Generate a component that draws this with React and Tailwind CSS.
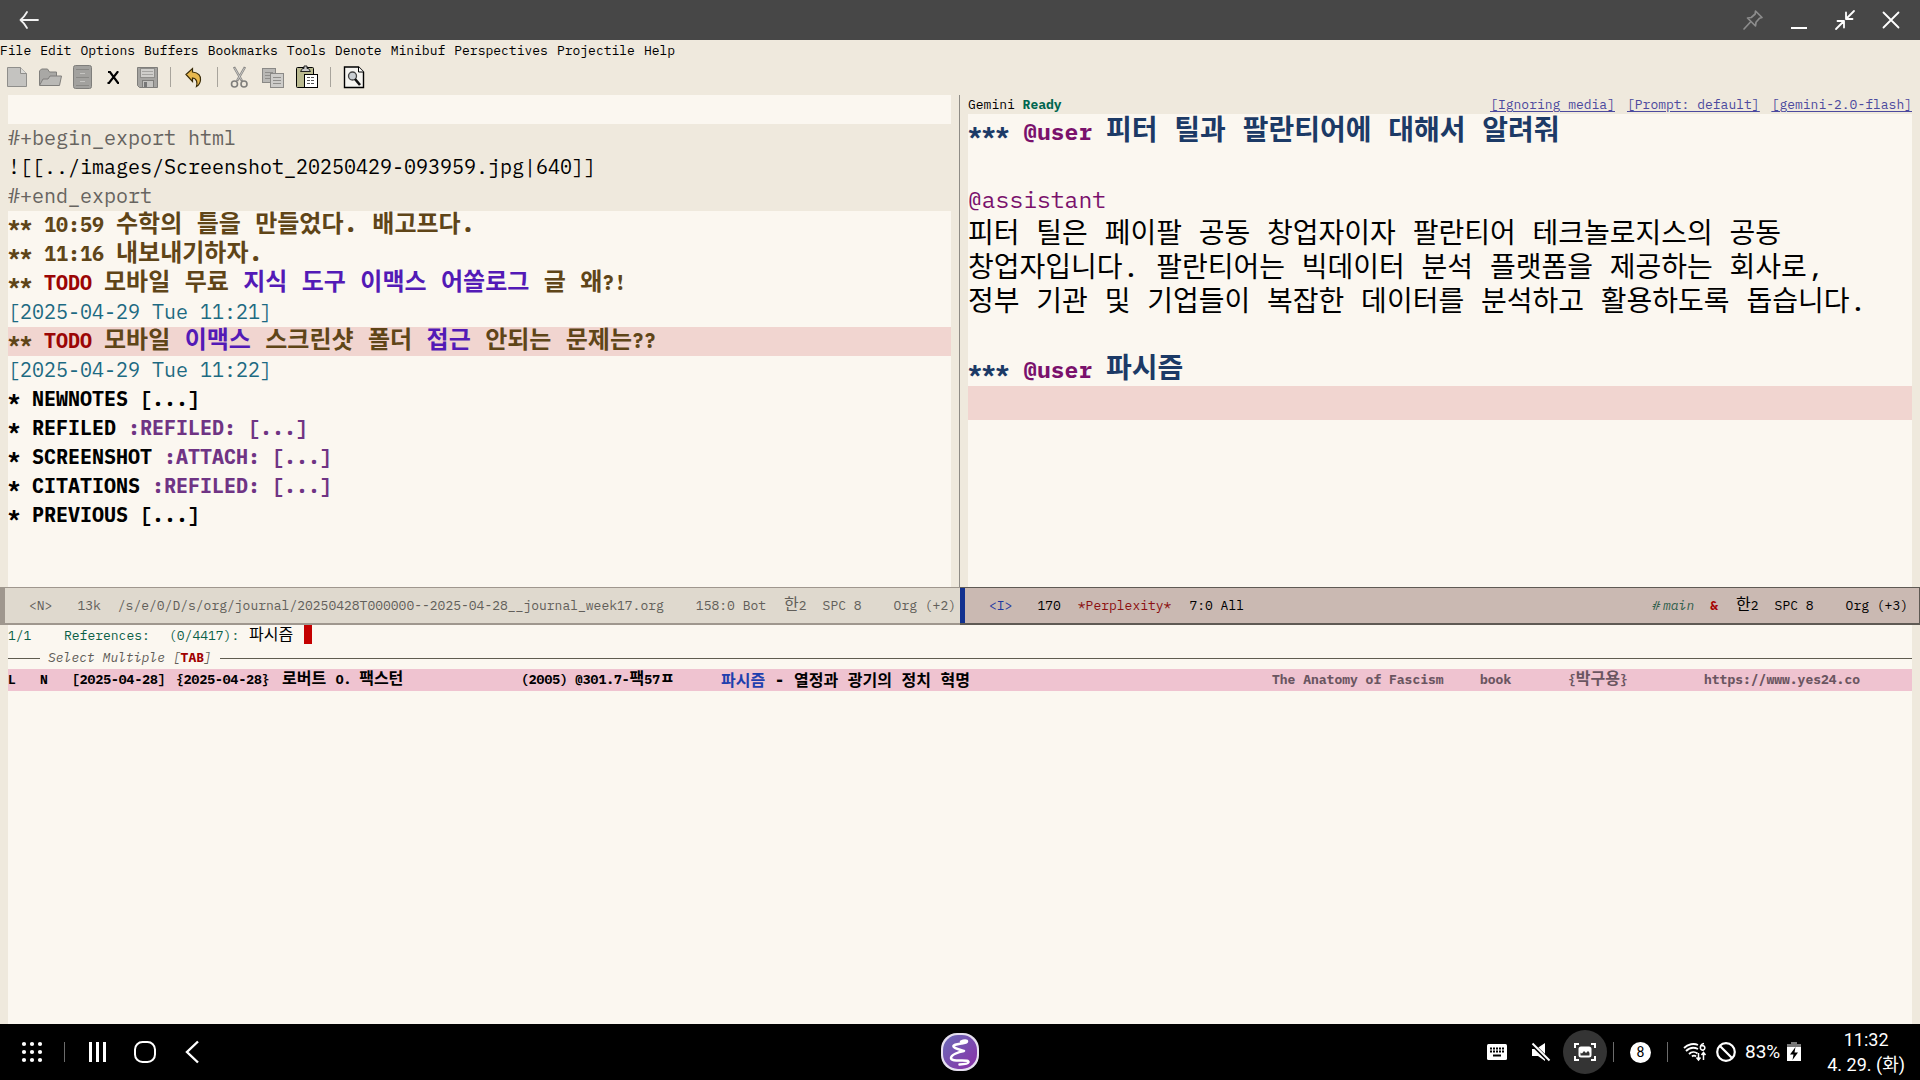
const MENUS = ["File", "Edit", "Options", "Buffers", "Bookmarks", "Tools", "Denote", "Minibuf", "Perspectives", "Projectile", "Help"];

const page = { fill: "#c4c3c0", stroke: "#8f8e8b" };

const Icon = {
  newFile: (
    <svg width="24" height="24" viewBox="0 0 24 24">
      <path d="M2.500 2.500h13l6 6v13h-19z" {...page} />
      <path d="M15.500 2.500v6h6" fill="#dddcd8" stroke="#8f8e8b" />
    </svg>
  ),
  open: (
    <svg width="24" height="24" viewBox="0 0 24 24">
      <path d="M1.500 20V6l2-2h6l2 3h7v4" fill="#a9a8a5" stroke="#807f7c" />
      <path d="M1.500 20.500L5 14h5l2-3h11.500l-2 9.500z" fill="#bab9b6" stroke="#807f7c" />
    </svg>
  ),
  drawer: (
    <svg width="24" height="24" viewBox="0 0 24 24">
      <rect x="2.500" y="0.500" width="18" height="23" rx="2" fill="#a2a19e" stroke="#7f7e7b" />
      <path d="M5 4.500h13M5 12.500h13M5 20.500h13" stroke="#8a8986" />
      <path d="M9 8.500h5M9 16.500h5" stroke="#c5c4c1" />
    </svg>
  ),
  close: (
    <svg width="22" height="24" viewBox="0 0 22 24">
      <path d="M4 7h2l8 11h1M14.500 7h-1L5 18H3.500" stroke="#000" strokeWidth="2.200" fill="none" />
    </svg>
  ),
  save: (
    <svg width="24" height="24" viewBox="0 0 24 24">
      <path d="M2.500 2.500h20v20h-18l-2-2z" fill="#a5a4a1" stroke="#7f7e7b" />
      <rect x="5.500" y="3.500" width="14" height="9" fill="#cfcecb" stroke="#8f8e8b" />
      <path d="M7 6.500h11M7 9.500h11" stroke="#a5a4a1" />
      <rect x="7.500" y="15.500" width="11" height="7" fill="#c4c3c0" stroke="#7f7e7b" />
      <rect x="9" y="17" width="3" height="5" fill="#777" />
    </svg>
  ),
  undo: (
    <svg width="24" height="24" viewBox="0 0 24 24">
      <path d="M4 9.500L10.500 3.500V7c6 .5 8.500 4 8 8-.3 3-1.500 5-4 6.500 1-4 .5-8-4-8.500v3.500z" fill="#e8b84e" stroke="#3a2c08" strokeWidth="1.200" />
    </svg>
  ),
  cut: (
    <svg width="24" height="24" viewBox="0 0 24 24" fill="none">
      <path d="M5 2l8 14M16 2L8 16" stroke="#8a8986" strokeWidth="2.500" />
      <path d="M5.500 3l7 12M15.500 3l-7 12" stroke="#d4d3d0" strokeWidth="0.800" />
      <circle cx="5.500" cy="19" r="3" stroke="#7f7e7b" strokeWidth="1.600" />
      <circle cx="15" cy="19" r="3" stroke="#7f7e7b" strokeWidth="1.600" />
    </svg>
  ),
  copy: (
    <svg width="24" height="24" viewBox="0 0 24 24">
      <rect x="0.500" y="3.500" width="13" height="14" fill="#b9b8b5" stroke="#8a8986" />
      <path d="M3 7.500h8M3 10.500h8M3 13.500h8" stroke="#8f8e8b" />
      <rect x="8.500" y="8.500" width="13" height="14" fill="#cdccc9" stroke="#8a8986" />
      <path d="M11 12.500h8M11 15.500h8M11 18.500h8" stroke="#8f8e8b" />
    </svg>
  ),
  paste: (
    <svg width="24" height="24" viewBox="0 0 24 24">
      <rect x="1.500" y="2.500" width="17" height="20" rx="1" fill="#b9b98f" stroke="#000" />
      <path d="M5.500 6.500l2-3h1.500v-2.500h3v2.500h1.500l2 3z" fill="#c9c9c9" stroke="#222" />
      <rect x="9.500" y="9.500" width="13" height="13" fill="#fff" stroke="#000" />
      <path d="M12 12.500h8M12 15.500h8M12 18.500h8" stroke="#555" strokeDasharray="3 1" />
    </svg>
  ),
  search: (
    <svg width="24" height="24" viewBox="0 0 24 24">
      <path d="M2.500 2h14l5 5v15.500h-19z" fill="#f5f4f0" stroke="#000" strokeWidth="1.400" />
      <path d="M16.500 2v5h5" fill="#fff" stroke="#000" />
      <circle cx="10.500" cy="11" r="4" fill="#c9ced2" stroke="#444" strokeWidth="1.300" />
      <path d="M13 14l5 6" stroke="#111" strokeWidth="2.600" />
    </svg>
  ),
};

const TOOLS = [
  ["New file", "newFile"],
  ["Open", "open"],
  ["Dired", "drawer"],
  ["Close", "close"],
  ["Save", "save"],
  null,
  ["Undo", "undo"],
  null,
  ["Cut", "cut"],
  ["Copy", "copy"],
  ["Paste", "paste"],
  null,
  ["Search", "search"],
];

function TitleBar() {
  return (
    <header className="flex h-10 items-center bg-[#474747] px-[18px]">
      <button aria-label="Back">
        <svg width="22" height="22" viewBox="0 0 22 22" fill="none" stroke="#f2f2f2" strokeWidth="1.800" strokeLinecap="round" strokeLinejoin="round">
          <path d="M20 11H2.500M9 3C7 6.500 5 9 2.500 11c2.500 2 4.500 4.500 6.500 8" />
        </svg>
      </button>
      <div className="ml-auto flex items-center gap-6">
        <button aria-label="Pin">
          <svg width="22" height="22" viewBox="0 0 22 22" fill="none" stroke="#8c8c8c" strokeWidth="1.700" strokeLinejoin="round" strokeLinecap="round">
            <path d="M13.500 2l6.500 6.500-2.500.8-3.500 4-.5 3.700-8-8 3.700-.5 4-3.500zM8 13.500L2 20" />
          </svg>
        </button>
        <button aria-label="Minimize">
          <svg width="22" height="22" viewBox="0 0 22 22" stroke="#fff" strokeWidth="2">
            <path d="M3 19h16" />
          </svg>
        </button>
        <button aria-label="Restore">
          <svg width="22" height="22" viewBox="0 0 22 22" fill="none" stroke="#fff" strokeWidth="1.800" strokeLinecap="round" strokeLinejoin="round">
            <path d="M20 2l-8 8M12 3.500V10h6.500M2 20l8-8M3.500 12H10v6.500" />
          </svg>
        </button>
        <button aria-label="Close window">
          <svg width="22" height="22" viewBox="0 0 22 22" stroke="#fff" strokeWidth="1.800" strokeLinecap="round">
            <path d="M3.500 3.500l15 15M18.500 3.500l-15 15" />
          </svg>
        </button>
      </div>
    </header>
  );
}

function Row({ className = "", children }) {
  return <div className={`h-[29px] whitespace-pre leading-[28px] ${className}`}>{children}</div>;
}

function Ko({ children }) {
  return <span className="text-[24px] leading-none">{children}</span>;
}

function KoSmall({ children }) {
  return <span className="text-[16px] leading-none">{children}</span>;
}

function Link({ children }) {
  return (
    <a href="#" className="text-[#531ab6]">
      {children}
    </a>
  );
}

function JournalPane() {
  return (
    <section className="min-w-0 border-r border-[#8f8c86] bg-[#efe9dd] pl-2 pr-2">
      <div className="h-full overflow-hidden bg-[#fbf7f0] text-[20px] text-black">
        <Row />
        <div className="bg-[#efe9dd] text-[#676460]">
          <Row>#+begin_export html</Row>
          <Row className="text-black">![[../images/Screenshot_20250429-093959.jpg|640]]</Row>
          <Row>#+end_export</Row>
        </div>
        <Row className="font-bold text-[#5f4518]">
          {"** 10:59 "}
          <Ko>수학의 틀을 만들었다. 배고프다.</Ko>
        </Row>
        <Row className="font-bold text-[#5f4518]">
          {"** 11:16 "}
          <Ko>내보내기하자.</Ko>
        </Row>
        <Row className="font-bold text-[#5f4518]">
          {"** "}
          <span className="text-[#9b0505]">TODO</span>{" "}
          <Ko>
            모바일 무료 <Link>지식</Link> <Link>도구</Link> <Link>이맥스</Link> <Link>어쏠로그</Link> 글 왜
          </Ko>
          ?!
        </Row>
        <Row className="text-[#1d6a82]">[2025-04-29 Tue 11:21]</Row>
        <Row className="bg-[#f1d5d0] font-bold text-[#5f4518]">
          {"** "}
          <span className="text-[#9b0505]">TODO</span>{" "}
          <Ko>
            모바일 <Link>이맥스</Link> 스크린샷 폴더 <Link>접근</Link> 안되는 문제는
          </Ko>
          ??
        </Row>
        <Row className="text-[#1d6a82]">[2025-04-29 Tue 11:22]</Row>
        <Row className="font-bold">* NEWNOTES [...]</Row>
        <Row className="font-bold">
          * REFILED <span className="text-[#6f3484]">:REFILED: [...]</span>
        </Row>
        <Row className="font-bold">
          * SCREENSHOT <span className="text-[#6f3484]">:ATTACH: [...]</span>
        </Row>
        <Row className="font-bold">
          * CITATIONS <span className="text-[#6f3484]">:REFILED: [...]</span>
        </Row>
        <Row className="font-bold">* PREVIOUS [...]</Row>
      </div>
    </section>
  );
}

function ChatRow({ className = "", children }) {
  return <div className={`h-[34px] whitespace-pre leading-[34px] ${className}`}>{children}</div>;
}

function ChatPane() {
  return (
    <section className="flex min-w-0 flex-col bg-[#efe9dd] px-2">
      <div className="flex h-[19px] shrink-0 items-center justify-between text-[13px] leading-[19px] text-black">
        <span className="whitespace-pre">
          Gemini <b className="text-[#00664f]">Ready</b>
        </span>
        <span className="flex gap-3 text-[#4c4a9e] underline underline-offset-2">
          <a href="#">[Ignoring media]</a>
          <a href="#">[Prompt: default]</a>
          <a href="#">[gemini-2.0-flash]</a>
        </span>
      </div>
      <div className="flex-1 bg-[#fbf7f0] text-[23px] text-black">
        <ChatRow className="font-bold text-[#1c3a66]">
          *** <span className="text-[#7a116c]">@user</span>{" "}
          <span className="text-[28px] leading-none">피터 틸과 팔란티어에 대해서 알려줘</span>
        </ChatRow>
        <ChatRow />
        <ChatRow className="text-[#7a116c]">@assistant</ChatRow>
        <ChatRow className="text-[28px]">피터 틸은 페이팔 공동 창업자이자 팔란티어 테크놀로지스의 공동</ChatRow>
        <ChatRow className="text-[28px]">창업자입니다. 팔란티어는 빅데이터 분석 플랫폼을 제공하는 회사로,</ChatRow>
        <ChatRow className="text-[28px]">정부 기관 및 기업들이 복잡한 데이터를 분석하고 활용하도록 돕습니다.</ChatRow>
        <ChatRow />
        <ChatRow className="font-bold text-[#1c3a66]">
          *** <span className="text-[#7a116c]">@user</span> <span className="text-[28px] leading-none">파시즘</span>
        </ChatRow>
        <ChatRow className="bg-[#f1d5d0]" />
      </div>
    </section>
  );
}

function ModeLines() {
  return (
    <div className="grid h-[38px] grid-cols-2 whitespace-pre text-[13px]">
      <div className="flex min-w-0 items-center border-b-2 border-l-[5px] border-t border-[#9f978e] bg-[#dfd9ce] pl-6 pr-1 text-[#625f5a]">
        <span>&lt;N&gt;</span>
        <span className="ml-[25px]">13k</span>
        <span className="ml-[17px]">/s/e/0/D/s/org/journal/20250428T000000--2025-04-28__journal_week17.org</span>
        <span className="ml-auto">158:0 Bot</span>
        <span className="ml-[18px]">
          <KoSmall>한</KoSmall>2
        </span>
        <span className="ml-4">SPC 8</span>
        <span className="ml-8">Org (+2)</span>
      </div>
      <div className="flex min-w-0 border-b-2 border-r border-t border-[#5f5a54] bg-[#cab9b2] text-black">
        <div className="w-[5px] bg-[#12318f]" />
        <div className="flex flex-1 items-center pl-6 pr-[11px]">
          <span className="text-[#2238a0]">&lt;I&gt;</span>
          <span className="ml-[25px]">170</span>
          <span className="ml-[17px] text-[#8b1010]">*Perplexity*</span>
          <span className="ml-[18px]">7:0 All</span>
          <span className="ml-auto italic text-[#2f5f4c]">#</span>
          <span className="ml-[3px] italic text-[#2f5f4c]">main</span>
          <b className="ml-4 text-[#a60000]">&amp;</b>
          <span className="ml-[18px]">
            <KoSmall>한</KoSmall>2
          </span>
          <span className="ml-4">SPC 8</span>
          <span className="ml-8">Org (+3)</span>
        </div>
      </div>
    </div>
  );
}

function Minibuffer() {
  return (
    <section className="flex-1 bg-[#efe9dd] px-2">
      <div className="h-full whitespace-pre bg-[#fbf7f0] text-[13px] leading-[22px] text-black">
        <div className="flex h-[22px] items-start text-[#0b6047]">
          <span className="w-14">1/1</span>
          <label htmlFor="reference" className="flex w-[185px]">
            <span className="w-[105px]">References:</span>
            <span>(0/4417):</span>
          </label>
          <input id="reference" defaultValue="파시즘" className="h-[19px] w-[55px] bg-transparent text-[16px] leading-[19px] text-black outline-none" />
          <span className="h-[19px] w-2 bg-[#c40000]" />
        </div>
        <div className="flex h-[22px] items-center gap-2 text-[#5f5c57]">
          <span className="h-px w-8 bg-[#5f5c50]" />
          <span className="italic">
            Select Multiple [<b className="not-italic text-[#a00000]">TAB</b>]
          </span>
          <span className="h-px flex-1 bg-[#5f5c50]" />
        </div>
        <div className="grid h-[22px] grid-cols-[32px_32px_104px_106px_239px_54px_146px_1fr_208px_88px_136px_208px] bg-[#efc3d0] font-bold">
          <span>L</span>
          <span>N</span>
          <span>[2025-04-28]</span>
          <span>{"{2025-04-28}"}</span>
          <span>
            <KoSmall>로버트 </KoSmall>O. <KoSmall>팩스턴</KoSmall>
          </span>
          <span>(2005)</span>
          <span>
            @301.7-<KoSmall>팩</KoSmall>57<KoSmall>ㅍ</KoSmall>
          </span>
          <span className="text-[16px]">
            <span className="text-[#1f3fae]">파시즘</span> - 열정과 광기의 정치 혁명
          </span>
          <span className="text-[#6a5560]">The Anatomy of Fascism</span>
          <span className="text-[#6a5560]">book</span>
          <span className="text-[#6a5560]">
            {"{"}
            <KoSmall>박구용</KoSmall>
            {"}"}
          </span>
          <span className="text-[#6a5560]">https://www.yes24.co</span>
        </div>
      </div>
    </section>
  );
}

function EmacsLogo() {
  return (
    <svg width="40" height="40" viewBox="0 0 40 40">
      <defs>
        <linearGradient id="emacs" x1="0" y1="0" x2="1" y2="1">
          <stop offset="0" stopColor="#6a6cb8" />
          <stop offset="1" stopColor="#8a2fa8" />
        </linearGradient>
      </defs>
      <rect x="1" y="1" width="38" height="38" rx="16" fill="#e6e0f0" />
      <rect x="3" y="3" width="34" height="34" rx="15" fill="url(#emacs)" />
      <path
        d="M21 9.500c3-1.500 6-1.500 6 0 0 1.500-3 1.500-6 2-5 .8-8 1.500-7.500 3 .6 1.800 5 2.800 10.500 4.500-6 1-13 4-13 7 0 2.800 6 2.500 11 2.500 4 0 7 .2 6.500 1.800-.4 1.500-4 2-9 2.200"
        fill="none"
        stroke="#fff"
        strokeWidth="2.500"
        strokeLinecap="round"
        strokeLinejoin="round"
      />
    </svg>
  );
}

function NavBar() {
  return (
    <footer className="grid h-14 grid-cols-[1fr_auto_1fr] items-center bg-black font-['Roboto','Noto_Sans_CJK_KR',sans-serif] text-[18px] text-white">
      <div className="flex items-center pl-[21px]">
        <button aria-label="Apps">
          <svg width="22" height="22" viewBox="0 0 22 22" fill="#fff">
            {[3, 11, 19].map((y) => [3, 11, 19].map((x) => <circle key={`${x}-${y}`} cx={x} cy={y} r="2.100" />))}
          </svg>
        </button>
        <span className="ml-[21px] h-5 w-px bg-[#6b6b6b]" />
        <button aria-label="Recents" className="ml-[22px]">
          <svg width="22" height="22" viewBox="0 0 22 22" fill="#fff">
            <path d="M2 1h3v20H2zM9 1h3v20H9zM16 1h3v20h-3z" />
          </svg>
        </button>
        <button aria-label="Home" className="ml-6">
          <svg width="24" height="24" viewBox="0 0 24 24" fill="none" stroke="#fff" strokeWidth="2">
            <rect x="2" y="2" width="20" height="20" rx="7.500" />
          </svg>
        </button>
        <button aria-label="Go back" className="ml-6">
          <svg width="22" height="24" viewBox="0 0 22 24" fill="none" stroke="#fff" strokeWidth="2.400">
            <path d="M17 1.500L6 12l11 10.500" />
          </svg>
        </button>
      </div>
      <button aria-label="Emacs">
        <EmacsLogo />
      </button>
      <div className="flex items-center justify-end pr-[15px]">
        <button aria-label="Keyboard">
          <svg width="20" height="16" viewBox="0 0 20 16">
            <rect width="20" height="16" rx="1.500" fill="#fff" />
            <path d="M3 4.500h14M3 7.500h14" stroke="#000" strokeWidth="2" strokeDasharray="2 1" />
            <path d="M6 11.500h8" stroke="#000" strokeWidth="2" />
          </svg>
        </button>
        <button aria-label="Muted" className="ml-6">
          <svg width="20" height="20" viewBox="0 0 20 20">
            <path d="M1 7h4l9-6v18l-7-5H1z" fill="#fff" />
            <path d="M0 1l19 18.500" stroke="#000" strokeWidth="4" />
            <path d="M1.500 1.500l17 17" stroke="#fff" strokeWidth="2" />
          </svg>
        </button>
        <button aria-label="Screenshot" className="ml-3 flex size-11 items-center justify-center rounded-full bg-[#343434]">
          <svg width="24" height="20" viewBox="0 0 24 20" fill="none" stroke="#fff" strokeWidth="2">
            <path d="M2 6V2h4M18 2h4v4M22 14v4h-4M6 18H2v-4" />
            <rect x="6.500" y="5.500" width="11" height="9" rx="1.500" />
            <path d="M7 6h10v5l-2-2-2 2-2-2-2 2.500-2-1z" fill="#fff" stroke="none" />
          </svg>
        </button>
        <span className="ml-[6px] h-5 w-px bg-[#6b6b6b]" />
        <span className="ml-4 flex size-[21px] items-center justify-center rounded-full bg-white text-[14px] leading-none text-black">8</span>
        <span className="ml-4 h-5 w-px bg-[#6b6b6b]" />
        <svg className="ml-[15px]" width="24" height="20" viewBox="0 0 24 20" fill="none" stroke="#fff" strokeWidth="1.800">
          <path d="M1 6c4-4 10-5 14-3M3 9c3.500-3.500 8-4 12-2M6 12c2.500-2.500 6-2.500 8.500-.5M9 14.500c1-1 3-1 4 0" />
          <path d="M21 1.500c-3 .5-4 3-3.500 5a2.200 2.200 0 1 0 1-2.500" strokeWidth="1.600" />
          <path d="M15.500 11v7M13.500 15.500l2 2.500 2-2.500M20.500 18v-7M18.500 13l2-2.500 2 2.500" strokeWidth="1.500" />
        </svg>
        <svg className="ml-[9px]" width="20" height="20" viewBox="0 0 20 20" fill="none" stroke="#fff" strokeWidth="2.200">
          <circle cx="10" cy="10" r="8.800" />
          <path d="M4 4l12 12" />
        </svg>
        <span className="ml-[9px] text-[19px]">83%</span>
        <svg className="ml-[7px]" width="14" height="20" viewBox="0 0 14 20">
          <path d="M4 0h6v2h4v4H0V2h4z" fill="#777" />
          <path d="M0 5h14v14H0z" fill="#fff" />
          <path d="M8.500 5L3 12.500h3.500L5.500 18 11 10.500H7.500z" fill="#000" />
        </svg>
        <div className="ml-[26px] flex flex-col items-center leading-[25px]">
          <span>11:32</span>
          <span>4. 29. (화)</span>
        </div>
      </div>
    </footer>
  );
}

export default function App() {
  return (
    <div className="flex h-screen flex-col overflow-hidden bg-[#efe9dd] font-['IBM_Plex_Mono','Liberation_Mono','Noto_Sans_CJK_KR',monospace]">
      <TitleBar />
      <nav className="flex h-[21px] items-center gap-[9px] text-[13px] leading-[21px] text-black">
        {MENUS.map((m) => (
          <button key={m}>{m}</button>
        ))}
      </nav>
      <div className="flex h-[34px] items-start gap-[9px] pl-[5px] pt-1" role="toolbar" aria-label="Tools">
        {TOOLS.map((t, i) =>
          t ? (
            <button key={i} aria-label={t[0]}>
              {Icon[t[1]]}
            </button>
          ) : (
            <span key={i} className="mx-[2px] mt-[2px] h-5 w-px bg-[#a8a49c]" />
          )
        )}
      </div>
      <main className="flex min-h-0 flex-1 flex-col">
        <div className="grid h-[492px] grid-cols-2">
          <JournalPane />
          <ChatPane />
        </div>
        <ModeLines />
        <Minibuffer />
      </main>
      <NavBar />
    </div>
  );
}
